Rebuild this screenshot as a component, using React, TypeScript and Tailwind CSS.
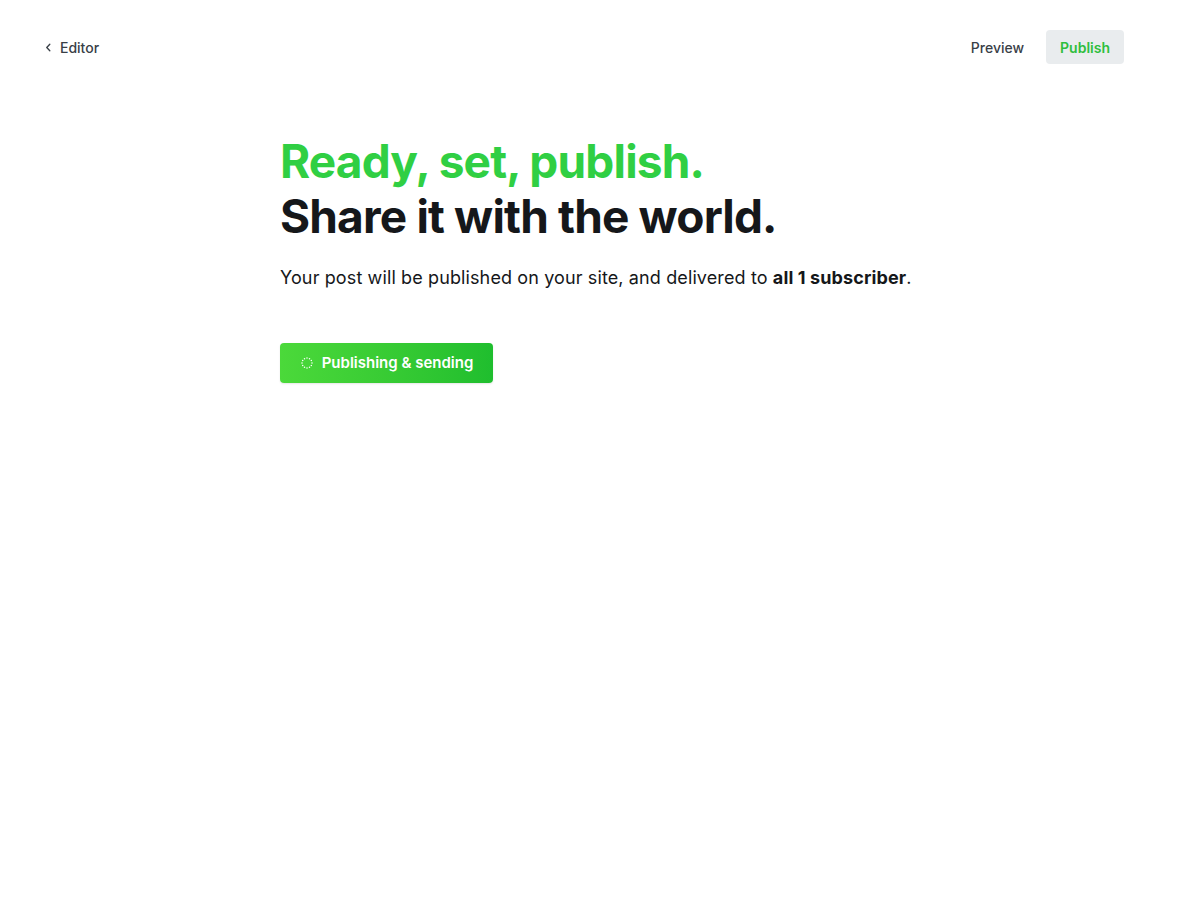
export default function App() {
  return (
    <div className="min-h-[924px] bg-white font-['Inter',sans-serif] text-[#15171a]">
      <header className="flex items-center justify-between pl-[43px] pr-[40px] pt-[30px]">
        <button className="flex h-[34px] items-center gap-[6px] text-[14px] font-medium text-[#394047]">
          <svg width="11" height="11" viewBox="0 0 10 10" fill="none" stroke="currentColor" strokeWidth="1.2">
            <path d="M6.2 2 3.4 5 6.2 8" strokeLinecap="round" strokeLinejoin="round" />
          </svg>
          Editor
        </button>
        <div className="flex items-center gap-[8px] pr-[36px]">
          <button className="h-[34px] px-[14px] text-[14px] font-medium text-[#394047]">Preview</button>
          <button className="h-[34px] rounded-[4px] bg-[#e9ecee] px-[14px] text-[14px] font-semibold text-[#2fbe3d]">
            Publish
          </button>
        </div>
      </header>

      <main className="pl-[280px] pt-[70px]">
        <h1 className="text-[46px] font-bold leading-[55px] tracking-[-0.018em]">
          <span className="block text-[#30cf43]">Ready, set, publish.</span>
          <span className="block">Share it with the world.</span>
        </h1>
        <p className="mt-[20px] text-[18px] leading-[28px] tracking-[0.12px] text-[#15171a]">
          Your post will be published on your site, and delivered to <strong className="font-bold">all 1 subscriber</strong>.
        </p>
        <button className="mt-[51px] flex h-[40px] w-[213px] items-center justify-center gap-[8px] rounded-[4px] bg-gradient-to-r from-[#4bd93a] to-[#1fbe2e] text-[15px] font-semibold text-white shadow-[0_1px_2px_rgba(0,0,0,0.1)]">
          <svg width="14" height="14" viewBox="0 0 14 14" fill="white">
            {Array.from({ length: 12 }).map((_, i) => {
              const a = (i / 12) * Math.PI * 2;
              return <circle key={i} cx={7 + 5 * Math.cos(a)} cy={7 + 5 * Math.sin(a)} r="0.75" />;
            })}
          </svg>
          Publishing &amp; sending
        </button>
      </main>
    </div>
  );
}
